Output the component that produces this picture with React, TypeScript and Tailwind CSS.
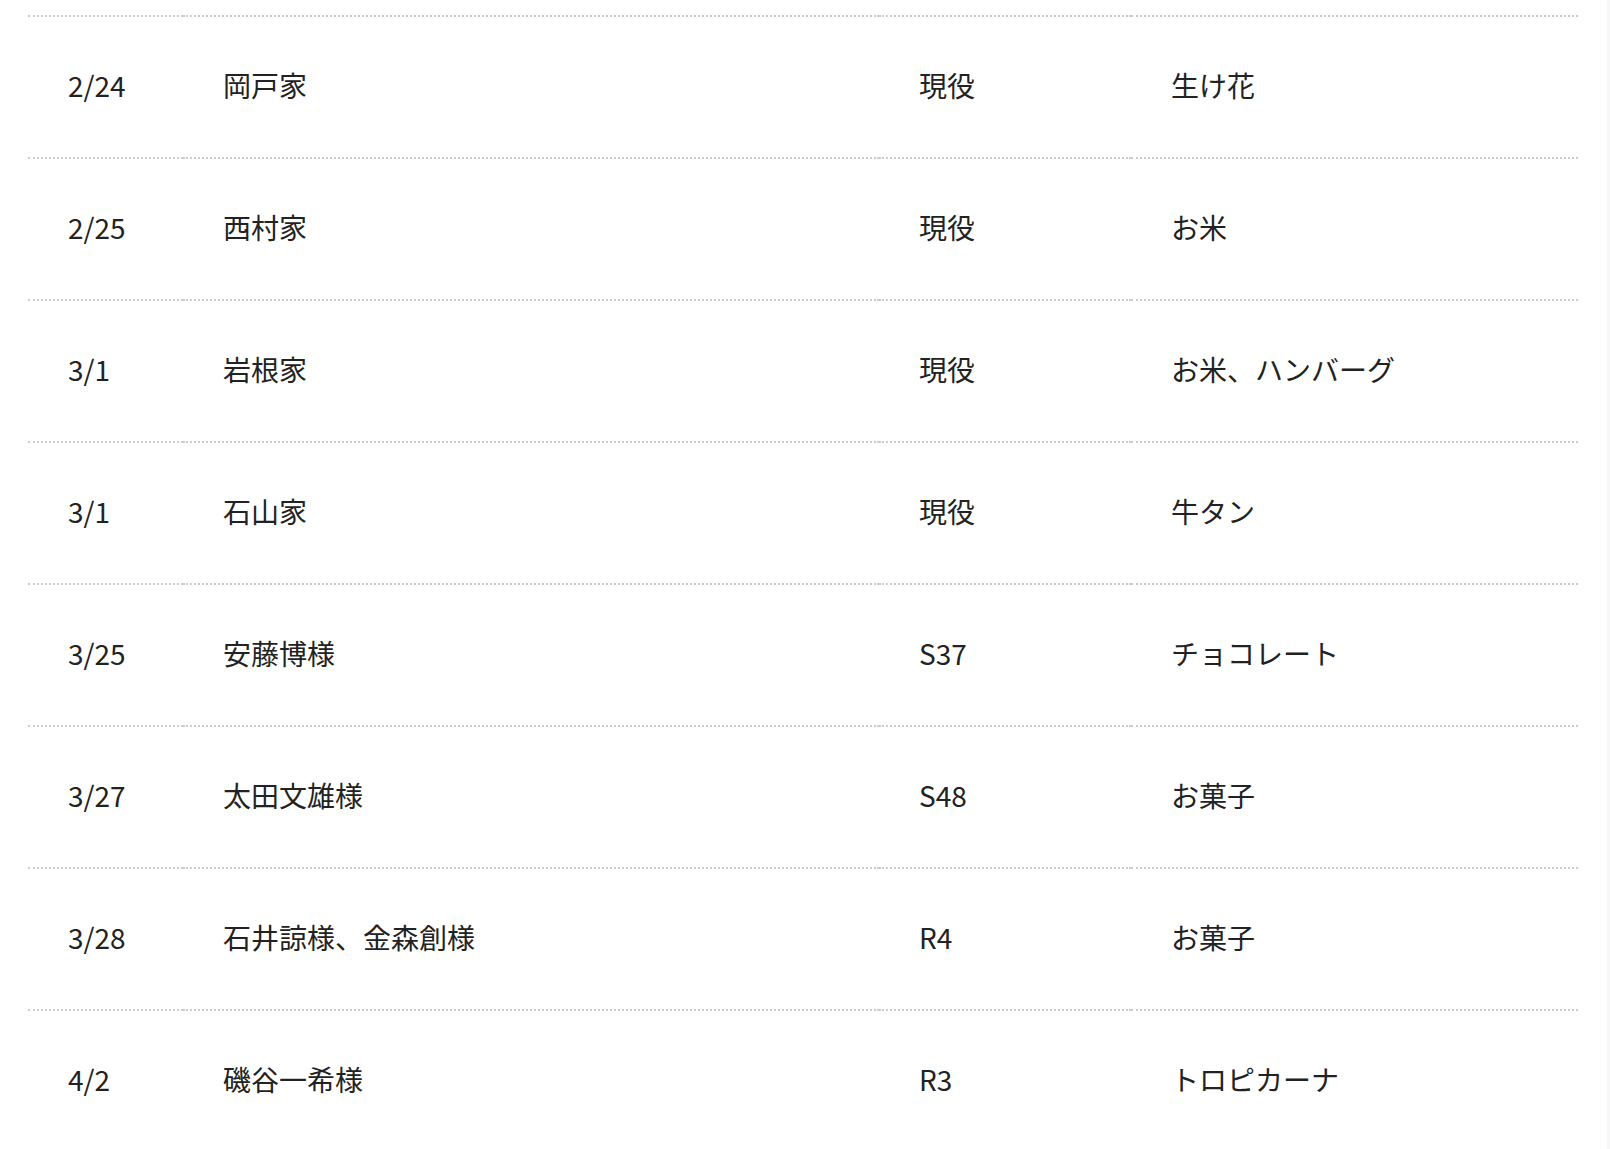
const rows = [
  { date: "2/24", name: "岡戸家", year: "現役", gift: "生け花" },
  { date: "2/25", name: "西村家", year: "現役", gift: "お米" },
  { date: "3/1", name: "岩根家", year: "現役", gift: "お米、ハンバーグ" },
  { date: "3/1", name: "石山家", year: "現役", gift: "牛タン" },
  { date: "3/25", name: "安藤博様", year: "S37", gift: "チョコレート" },
  { date: "3/27", name: "太田文雄様", year: "S48", gift: "お菓子" },
  { date: "3/28", name: "石井諒様、金森創様", year: "R4", gift: "お菓子" },
  { date: "4/2", name: "磯谷一希様", year: "R3", gift: "トロピカーナ" },
];

const cell =
  "flex h-[142px] items-center border-t-2 border-dotted border-[#cccccc] pb-[4px] pl-[40px]";

export default function App() {
  return (
    <div className="relative h-[1149px] overflow-hidden bg-white font-['Noto_Sans_CJK_JP','Noto_Sans',sans-serif] text-[28px] text-[#222222]">
      <div className="pl-[28px] pr-[32px] pt-[15px]">
        {rows.map((row, i) => (
          <div key={i} className="grid grid-cols-[155px_696px_252px_1fr]">
            <div className={cell}>{row.date}</div>
            <div className={cell}>{row.name}</div>
            <div className={cell}>{row.year}</div>
            <div className={cell}>{row.gift}</div>
          </div>
        ))}
      </div>
      <div className="absolute right-0 top-0 h-full w-[3px] bg-[#f7f7f7]" />
    </div>
  );
}
